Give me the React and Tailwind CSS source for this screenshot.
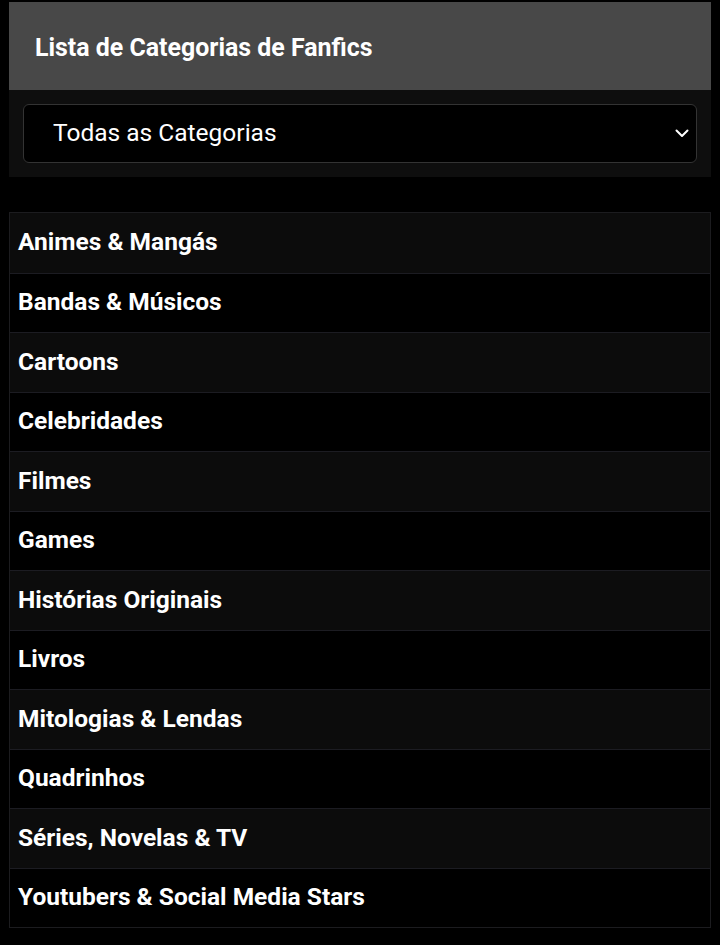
const categories = [
  'Animes & Mangás',
  'Bandas & Músicos',
  'Cartoons',
  'Celebridades',
  'Filmes',
  'Games',
  'Histórias Originais',
  'Livros',
  'Mitologias & Lendas',
  'Quadrinhos',
  'Séries, Novelas & TV',
  'Youtubers & Social Media Stars',
]

export default function App() {
  return (
    <div className="min-h-screen bg-black pt-[2px] px-[9px] font-['Roboto',sans-serif] text-white">
      <div className="h-[88px] bg-[#484848] flex items-center pl-[26px]">
        <h1 className="inline-block origin-left scale-x-[0.94] text-[26.5px] font-bold pt-[2px]">Lista de Categorias de Fanfics</h1>
      </div>

      <div className="h-[87px] bg-[#0e0e0e] px-[14px] pt-[14px]">
        <div className="h-[59px] rounded-[6px] border border-[#333] bg-black flex items-center justify-between pl-[29px] pr-[7px]">
          <span className="text-[24.5px]">Todas as Categorias</span>
          <svg width="14" height="9" viewBox="0 0 14 9" fill="none" stroke="white" strokeWidth="2" strokeLinecap="round" strokeLinejoin="round">
            <path d="M1.5 1.5 7 7l5.5-5.5" />
          </svg>
        </div>
      </div>

      <ul className="mt-[35px] border border-[#1c1c1f]">
        {categories.map((c, i) => (
          <li
            key={c}
            className={`h-[59.5px] flex items-center pl-[8px] text-[24.5px] font-bold ${i > 0 ? 'border-t border-[#1c1c22]' : ''} ${i % 2 === 0 ? 'bg-[#0c0c0c]' : 'bg-black'}`}
          >
            {c}
          </li>
        ))}
      </ul>
    </div>
  )
}
